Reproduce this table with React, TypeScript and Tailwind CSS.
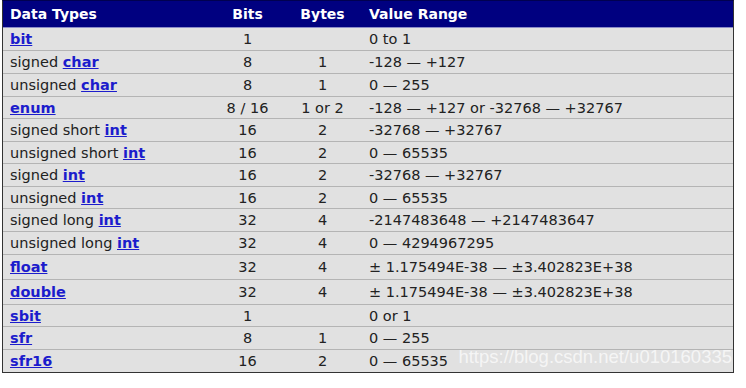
type Row = {
  pre?: string;
  link: string;
  bits: string;
  bytes: string;
  range: string;
  h: string;
};

const rows: Row[] = [
  { link: "bit", bits: "1", bytes: "", range: "0 to 1", h: "h-[23px]" },
  { pre: "signed ", link: "char", bits: "8", bytes: "1", range: "-128 — +127", h: "h-[23px]" },
  { pre: "unsigned ", link: "char", bits: "8", bytes: "1", range: "0 — 255", h: "h-[23px]" },
  { link: "enum", bits: "8 / 16", bytes: "1 or 2", range: "-128 — +127 or -32768 — +32767", h: "h-[22px]" },
  { pre: "signed short ", link: "int", bits: "16", bytes: "2", range: "-32768 — +32767", h: "h-[23px]" },
  { pre: "unsigned short ", link: "int", bits: "16", bytes: "2", range: "0 — 65535", h: "h-[22px]" },
  { pre: "signed ", link: "int", bits: "16", bytes: "2", range: "-32768 — +32767", h: "h-[23px]" },
  { pre: "unsigned ", link: "int", bits: "16", bytes: "2", range: "0 — 65535", h: "h-[22px]" },
  { pre: "signed long ", link: "int", bits: "32", bytes: "4", range: "-2147483648 — +2147483647", h: "h-[23px]" },
  { pre: "unsigned long ", link: "int", bits: "32", bytes: "4", range: "0 — 4294967295", h: "h-[23px]" },
  { link: "float", bits: "32", bytes: "4", range: "± 1.175494E-38 — ±3.402823E+38", h: "h-[25px]" },
  { link: "double", bits: "32", bytes: "4", range: "± 1.175494E-38 — ±3.402823E+38", h: "h-[25px]" },
  { link: "sbit", bits: "1", bytes: "", range: "0 or 1", h: "h-[22px]" },
  { link: "sfr", bits: "8", bytes: "1", range: "0 — 255", h: "h-[23px]" },
  { link: "sfr16", bits: "16", bytes: "2", range: "0 — 65535", h: "h-[22px]" },
];

export default function App() {
  return (
    <div className="w-[746px] h-[388px] bg-white pl-[2px] font-['DejaVu_Sans',Verdana,sans-serif] text-[14.5px] text-[#222]">
      <div className="relative w-[732px] border-x border-b border-[#333] border-t border-t-[#000050]">
        <div className="flex h-[27px] items-center bg-[#000080] text-white text-[14px] font-bold border-b border-[#8c8cc8]">
          <div className="w-[208px] pl-[7px]">Data Types</div>
          <div className="w-[73px] text-center">Bits</div>
          <div className="w-[77px] text-center">Bytes</div>
          <div className="flex-1 pl-[8px]">Value Range</div>
        </div>
        {rows.map((r, i) => (
          <div
            key={i}
            className={`flex items-center pt-[2px] bg-[#e1e1e1] ${r.h} ${i < rows.length - 1 ? "border-b border-[#b4b4b4]" : ""}`}
          >
            <div className="w-[208px] pl-[7px] whitespace-nowrap">
              {r.pre}
              <a href="#" className="font-bold text-[#1c1ccc] underline">
                {r.link}
              </a>
            </div>
            <div className="w-[73px] text-center">{r.bits}</div>
            <div className="w-[77px] text-center">{r.bytes}</div>
            <div className="flex-1 pl-[8px] whitespace-nowrap">{r.range}</div>
          </div>
        ))}
        <div className="absolute right-[1px] bottom-[1px] font-['Liberation_Sans',Arial,sans-serif] text-[18.5px] text-white/70 pointer-events-none">
          https://blog.csdn.net/u010160335
        </div>
      </div>
    </div>
  );
}
